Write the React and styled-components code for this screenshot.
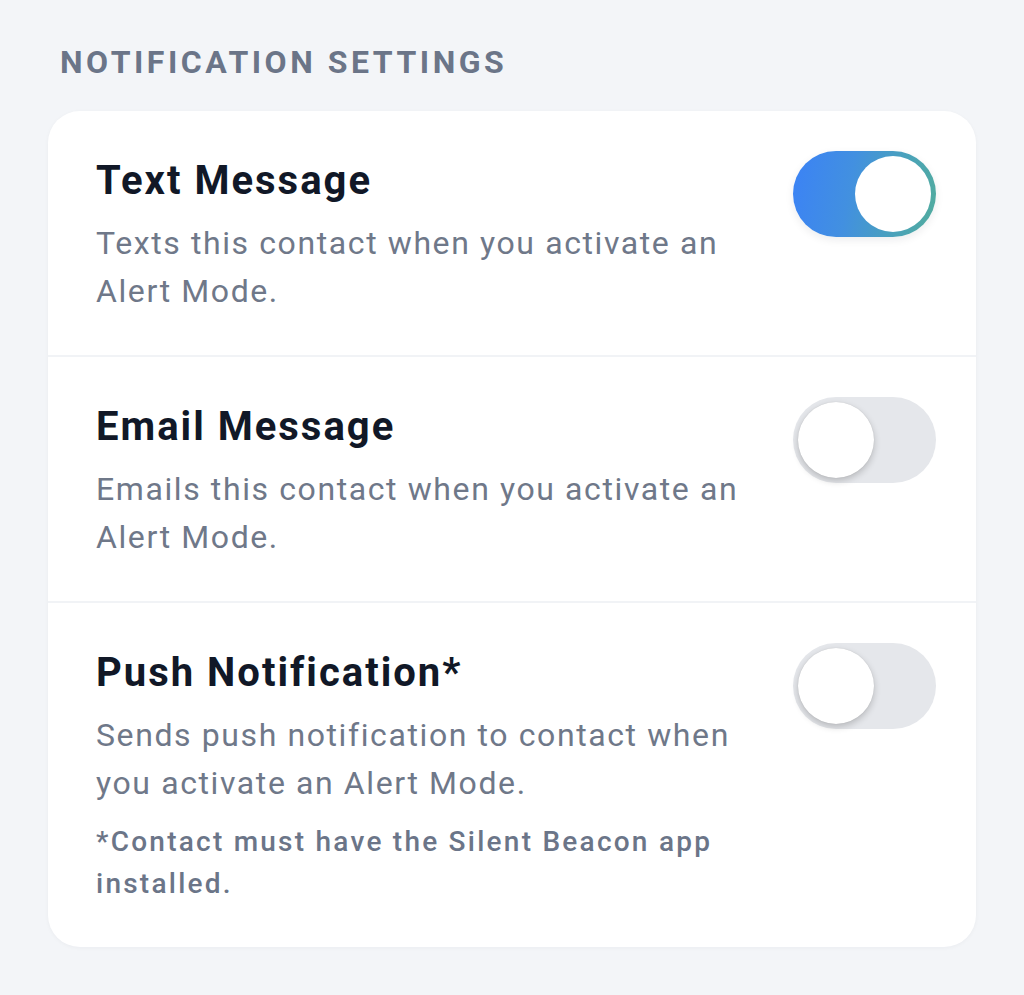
import React, { useState } from "react";
import styled, { createGlobalStyle } from "styled-components";

const GlobalStyle = createGlobalStyle`
  html, body {
    margin: 0;
    padding: 0;
    background: #f3f5f8;
  }
  body {
    font-family: Roboto, "Noto Sans", "Liberation Sans", sans-serif;
    -webkit-font-smoothing: antialiased;
  }
  * { box-sizing: border-box; }
`;

const Page = styled.div`
  min-height: 995px;
  background: #f3f5f8;
  padding: 42px 48px 48px;
`;

const SectionHeader = styled.h2`
  margin: 0 12px 29px;
  font-size: 32px;
  line-height: 40px;
  font-weight: 700;
  letter-spacing: 0.11em;
  color: #6b7588;
  text-transform: uppercase;
`;

const Card = styled.div`
  background: #ffffff;
  border-radius: 32px;
  box-shadow: 0 1px 4px rgba(15, 23, 42, 0.04);
  overflow: hidden;
`;

const Row = styled.div`
  display: flex;
  justify-content: space-between;
  align-items: flex-start;
  gap: 40px;
  padding: 40px 40px 40px 48px;
  & + & {
    border-top: 2px solid #f1f3f6;
  }
`;

const TextBlock = styled.div`
  flex: 1;
  min-width: 0;
  padding-top: 6px;
`;

const Title = styled.div`
  font-size: 40px;
  line-height: 48px;
  font-weight: 700;
  letter-spacing: 0.05em;
  color: #111827;
  margin-bottom: 14px;
`;

const Description = styled.div`
  font-size: 32px;
  line-height: 48px;
  font-weight: 400;
  letter-spacing: 0.05em;
  color: #6f7889;
`;

const Note = styled.div`
  margin: 14px 0 2px;
  font-size: 28px;
  line-height: 42px;
  font-weight: 500;
  letter-spacing: 0.08em;
  color: #6b7588;
`;

const Track = styled.button`
  position: relative;
  flex: none;
  width: 143px;
  height: 86px;
  border: none;
  padding: 0;
  border-radius: 43px;
  cursor: pointer;
  background: ${(p) =>
    p.$on
      ? "linear-gradient(100deg, #3b82f6 0%, #4290e0 40%, #4aa3b8 75%, #52ac9c 100%)"
      : "#e5e7eb"};
  box-shadow: ${(p) => (p.$on ? "0 3px 8px rgba(15, 23, 42, 0.08)" : "none")};
`;

const Knob = styled.span`
  position: absolute;
  top: 5px;
  left: ${(p) => (p.$on ? "62px" : "5px")};
  width: 76px;
  height: 76px;
  border-radius: 50%;
  background: #ffffff;
  box-shadow: ${(p) =>
    p.$on ? "none" : "0 3px 7px rgba(0, 0, 0, 0.2), 0 0 1px rgba(0,0,0,0.15)"};
  transition: left 0.2s;
`;

function Toggle({ on, onChange }) {
  return (
    <Track $on={on} onClick={onChange} aria-pressed={on}>
      <Knob $on={on} />
    </Track>
  );
}

const items = [
  {
    key: "text",
    title: "Text Message",
    desc: "Texts this contact when you activate an Alert Mode.",
  },
  {
    key: "email",
    title: "Email Message",
    desc: "Emails this contact when you activate an Alert Mode.",
  },
  {
    key: "push",
    title: "Push Notification*",
    desc: "Sends push notification to contact when you activate an Alert Mode.",
    note: "*Contact must have the Silent Beacon app installed.",
  },
];

export default function App() {
  const [state, setState] = useState({ text: true, email: false, push: false });
  return (
    <>
      <GlobalStyle />
      <Page>
        <SectionHeader>Notification Settings</SectionHeader>
        <Card>
          {items.map((it) => (
            <Row key={it.key}>
              <TextBlock>
                <Title>{it.title}</Title>
                <Description>{it.desc}</Description>
                {it.note && <Note>{it.note}</Note>}
              </TextBlock>
              <Toggle
                on={state[it.key]}
                onChange={() => setState((s) => ({ ...s, [it.key]: !s[it.key] }))}
              />
            </Row>
          ))}
        </Card>
      </Page>
    </>
  );
}
